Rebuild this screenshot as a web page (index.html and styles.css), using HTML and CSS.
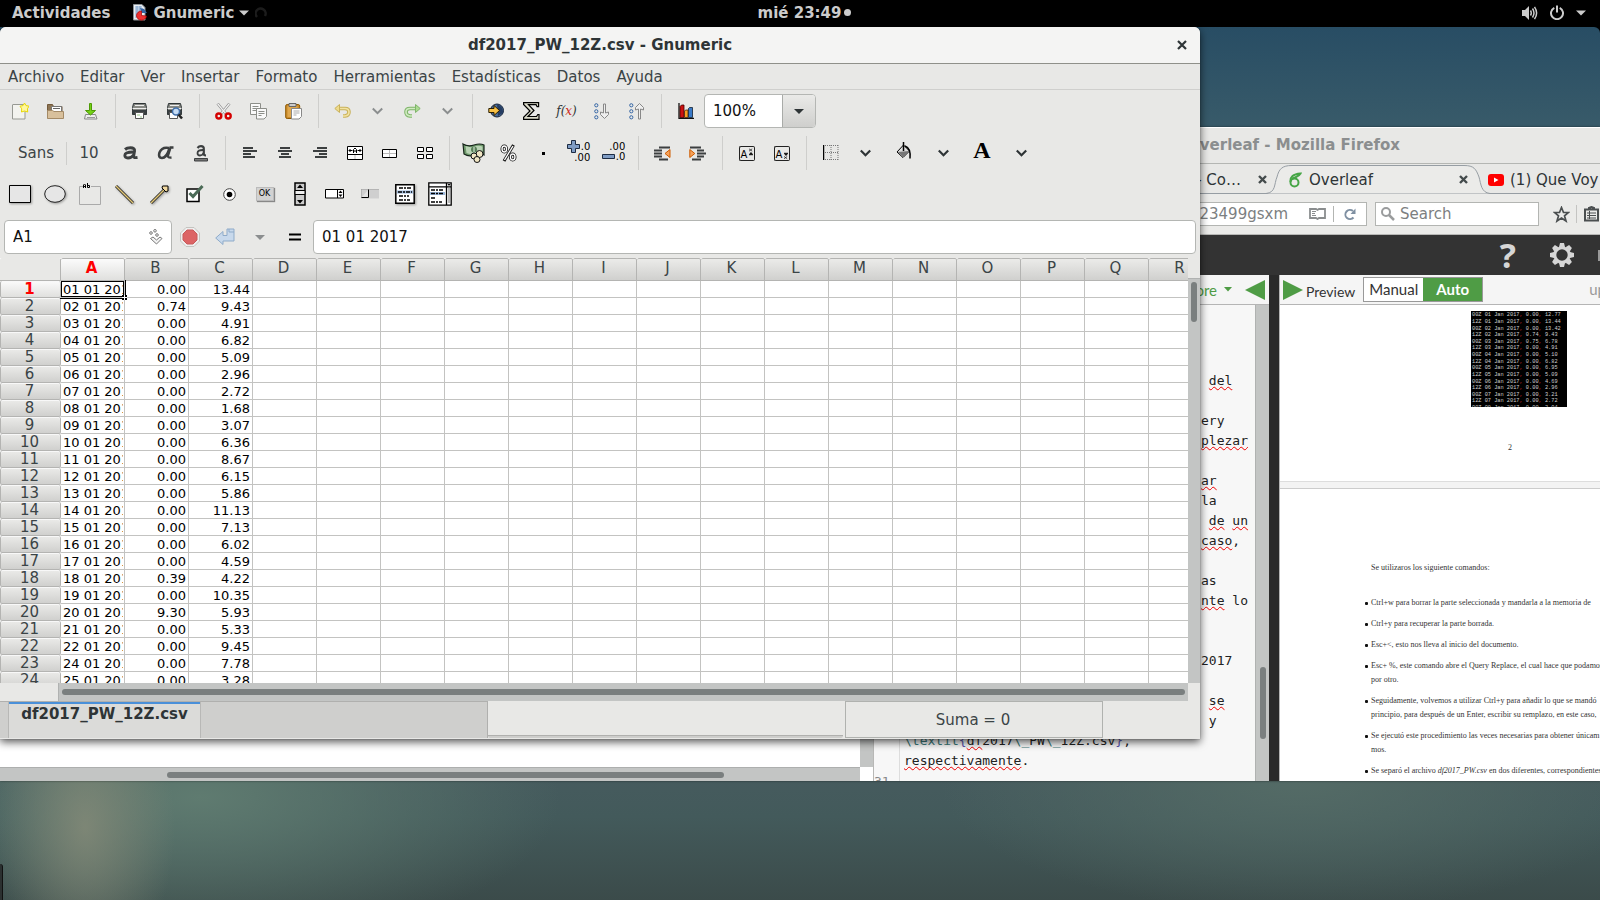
FILE: index.html
```html
<!DOCTYPE html>
<html lang="es">
<head>
<meta charset="utf-8">
<title>df2017_PW_12Z.csv - Gnumeric</title>
<link rel="stylesheet" href="styles.css">
</head>
<body>
<header class="topbar">
  <div class="topbar-left">
    <button class="top-item">Actividades</button>
    <button class="top-item app-item">
      <svg width="16" height="17" viewBox="0 0 16 17"><path d="M1.500 .5H10l3 3V16H1.500z" fill="#e9eef2" stroke="#8b9196"/><path d="M3 3h7M3 5h8M3 7h8M3 9h4M3 11h2M3 13h2M5 2v11M8 2v5" stroke="#6d94c4" stroke-width=".8"/><path d="M8 4l4 1 3 4h-5z" fill="#3465a4"/><path d="M9.500 7v4.500l5 .5a5 4.600 0 1 1-5-5z" fill="#ef3030" stroke="#a40000" stroke-width=".7"/></svg>
      Gnumeric
      <svg width="10" height="6" viewBox="0 0 10 6"><path d="M0 .5h10L5 5.500z" fill="#ccc"/></svg>
    </button>
    <svg class="spinner" width="12" height="12" viewBox="0 0 12 12"><path d="M2 10A5 5 0 1 1 10 9" fill="none" stroke="#1c1c1c" stroke-width="2.500"/></svg>
  </div>
  <button class="top-item clock">mié 23:49<span class="dot"></span></button>
  <button class="top-item status">
    <svg width="16" height="14" viewBox="0 0 16 14"><path d="M0 4h3l4-4v14L3 10H0z" fill="#ccc"/><path d="M8.500 4.500q1.500 2.500 0 5M10.500 2.500q3 4.500 0 9M12.500 .8q4.200 6.200 0 12.400" fill="none" stroke="#ccc" stroke-width="1.500"/></svg>
    <svg width="14" height="15" viewBox="0 0 14 15"><path d="M4.300 2.800A6 6 0 1 0 9.700 2.800M7 .5v7" fill="none" stroke="#ccc" stroke-width="2"/></svg>
    <svg width="10" height="6" viewBox="0 0 10 6"><path d="M0 .5h10L5 5.500z" fill="#ccc"/></svg>
  </button>
</header>

<main class="desktop">
  <section class="firefox">
    <div class="ff-title">Overleaf - Mozilla Firefox</div>
    <div class="ff-tabs">
      <div class="ff-tab tab-prev"><span>- Co…</span><button class="close" aria-label="Cerrar pestaña"><svg width="9" height="9" viewBox="0 0 9 9"><path d="M1 1l7 7M8 1L1 8" stroke="#444b4c" stroke-width="2.400"/></svg></button></div>
      <div class="ff-tab tab-active">
        <svg class="tab-shape" width="224" height="30" viewBox="0 0 224 30"><path d="M0 29.500C10 28.500 8 20 11 13C13 5 16 1.500 26 1.500H198C208 1.500 210 5 213 13C215 20 215 28.500 224 29.500" fill="#ebebe9" stroke="#969da3"/></svg>
        <svg class="fav" width="13" height="16" viewBox="0 0 13 16"><circle cx="5.500" cy="10.500" r="4" fill="none" stroke="#47a647" stroke-width="2"/><path d="M1.500 10C1 5 4 2 11.500 1.500C10 4.500 7 5 4 6.500" fill="none" stroke="#47a647" stroke-width="2"/></svg>
        <span>Overleaf</span>
        <button class="close" aria-label="Cerrar pestaña"><svg width="9" height="9" viewBox="0 0 9 9"><path d="M1 1l7 7M8 1L1 8" stroke="#444b4c" stroke-width="2.400"/></svg></button>
      </div>
      <div class="ff-tab tab-next"><svg width="16" height="12" viewBox="0 0 16 12"><rect width="16" height="12" rx="3" fill="#f00"/><path d="M6 3.500l4.500 2.500L6 8.500z" fill="#fff"/></svg><span>(1) Que Voy</span></div>
    </div>
    <div class="ff-nav">
      <div class="url-box">
        <input type="text" class="url" value="23499gsxm" aria-label="Dirección">
        <svg width="17" height="12" viewBox="0 0 17 12"><path d="M1 1h6l1.500 1L10 1h6v9h-6l-1.500 1L7 10H1z" fill="none" stroke="#8a8d8e" stroke-width="1.800"/><path d="M3 3.500h4M3 5.500h3M3 7.500h4" stroke="#8a8d8e"/></svg>
        <i class="url-sep"></i>
        <svg width="13" height="13" viewBox="0 0 13 13"><path d="M9.500 9.500A4.600 4.600 0 1 1 9 3" fill="none" stroke="#7f90a2" stroke-width="2"/><path d="M11.500 .5V6H6.500z" fill="#7f90a2"/></svg>
      </div>
      <label class="search-box"><svg width="14" height="14" viewBox="0 0 14 14"><circle cx="5" cy="5" r="4" fill="none" stroke="#9a9c9d" stroke-width="2"/><path d="M8 8l5 5" stroke="#9a9c9d" stroke-width="2.500"/></svg><input type="text" placeholder="Search" aria-label="Search"></label>
      <button class="nav-icon" aria-label="Marcador"><svg width="17" height="17" viewBox="0 0 17 17"><path d="M8.500 1.500l2 5h5l-4 3.300 1.500 5.200-4.500-3-4.500 3 1.500-5.200-4-3.300h5z" fill="none" stroke="#4b4f50" stroke-width="1.700"/></svg></button>
      <i class="nav-sep"></i>
      <button class="nav-icon" aria-label="Lista"><svg width="16" height="16" viewBox="0 0 16 16"><path d="M1 3.500h13v11H1zM5 3V2l2.500-1L10 2v1" fill="none" stroke="#4b4f50" stroke-width="2"/><path d="M3 7h9M3 9.500h9M3 12h9M5.500 5v8" stroke="#4b4f50"/></svg></button>
    </div>
    <div class="ol-head">
      <button class="ol-help" aria-label="Ayuda">?</button>
      <button class="ol-gear" aria-label="Ajustes"><svg width="24" height="24" viewBox="-12 -12 24 24"><g fill="#d6d6d6"><g id="tooth"><path d="M-2-12h4l1 4h-6zM-2 12h4l1-4h-6z"/></g><use href="#tooth" transform="rotate(45)"/><use href="#tooth" transform="rotate(90)"/><use href="#tooth" transform="rotate(135)"/></g><circle r="7.200" fill="none" stroke="#d6d6d6" stroke-width="3"/></svg></button>
      <i class="ol-edge"></i>
    </div>
    <div class="ol-body">
      <div class="files"><div class="files-strip"></div><div class="files-page"><i></i></div><div class="files-scroll"><i></i></div></div>
      <div class="editor">
        <div class="editor-bar"><a href="#">More <svg width="8" height="5" viewBox="0 0 8 5"><path d="M0 0h8L4 4.500z" fill="#4f9c45"/></svg></a><button aria-label="Ocultar editor"><svg width="20" height="20" viewBox="0 0 20 20"><path d="M20 0v20L0 10z" fill="#4f9c45"/></svg></button></div>
        <div class="editor-main">
          <div class="gutter">31</div>
          <div class="code">
            <p class="tail"> <u>del</u></p><p></p><p class="tail">ery</p><p class="tail"><u>plezar</u></p><p></p><p class="tail"><u>ar</u></p><p class="tail">la</p><p class="tail"> <u>de</u> <u>un</u></p><p class="tail"><u>caso</u>,</p><p></p><p class="tail">as</p><p class="tail"><u>nte</u> lo</p><p></p><p></p><p class="tail">2017</p><p></p><p class="tail"> <u>se</u></p><p class="tail"> y</p><p><b>\textit</b><em>{</em><u>df</u>2017<b>\_</b>PW<b>\_</b>12Z.csv<em>}</em>,</p><p><u>respectivamente</u>.</p>
          </div>
          <div class="editor-scroll"><i></i></div>
        </div>
      </div>
      <div class="splitter"></div>
      <div class="preview">
        <div class="preview-bar">
          <button aria-label="Ocultar vista"><svg width="20" height="20" viewBox="0 0 20 20"><path d="M0 0v20L20 10z" fill="#4f9c45"/></svg></button>
          <span class="preview-label">Preview</span>
          <div class="mode"><button>Manual</button><button class="on">Auto</button></div>
          <span class="upd">up</span>
        </div>
        <div class="page page-one">
          <svg class="shot" width="96" height="96" viewBox="0 0 290 290"><rect width="290" height="290"/><g id="shot-lines"></g></svg>
          <span class="page-no">2</span>
        </div>
        <div class="page page-two">
          <p>Se utilizaros los siguiente comandos:</p>
          <ul>
            <li>Ctrl+w para borrar la parte seleccionada y mandarla a la memoria de</li>
            <li>Ctrl+y para recuperar la parte borrada.</li>
            <li>Esc+&lt;, esto nos lleva al inicio del documento.</li>
            <li>Esc+ %, este comando abre el Query Replace, el cual hace que podamos<br>por otro.</li>
            <li>Seguidamente, volvemos a utilizar Ctrl+y para añadir lo que se mandó<br>principio, para después de un Enter, escribir su remplazo, en este caso,</li>
            <li>Se ejecutó este procedimiento las veces necesarias para obtener únicam<br>mos.</li>
            <li>Se separó el archivo <i>df2017_PW.csv</i> en dos diferentes, correspondientes</li>
          </ul>
        </div>
      </div>
    </div>
  </section>

  <i class="tray"></i>

  <section class="gnumeric">
    <div class="g-title"><h1>df2017_PW_12Z.csv - Gnumeric</h1><button class="g-close" aria-label="Cerrar"><svg width="10" height="10" viewBox="0 0 10 10"><path d="M1 1l8 8M9 1L1 9" stroke="#2e3436" stroke-width="2.200"/></svg></button></div>
    <nav class="menubar"><button>Archivo</button><button>Editar</button><button>Ver</button><button>Insertar</button><button>Formato</button><button>Herramientas</button><button>Estadísticas</button><button>Datos</button><button>Ayuda</button></nav>

    <div class="toolbar">
      <button aria-label="Nuevo"><svg width="17" height="17" viewBox="0 0 17 17"><path d="M.5 2Q.5 1.500 1 1.500H13V16H.5z" fill="#f3f3ef" stroke="#979993"/><path d="M12.500 0l1.500 2.600 3 .6-1.600 2.600.3 3.200-3.200-1-3 1 .2-3.200L8 3.200l3-.6z" fill="#fff7a0" stroke="#e8d800"/></svg></button>
      <button aria-label="Abrir"><svg width="17" height="17" viewBox="0 0 17 17"><path d="M.5 15V1.500h5l1 2H15V15z" fill="#8d7554" stroke="#72593a"/><path d="M4.500 3.500h10v6h-10z" fill="#fff" stroke="#777"/><path d="M6 5.500h7" stroke="#666"/><path d="M.5 7.500h5l1.500 1h9.500v7H.5z" fill="#d8c09c" stroke="#a48a66"/></svg></button>
      <button aria-label="Guardar"><svg width="14" height="17" viewBox="0 0 14 17"><path d="M1.500 11.500h10l1.500 4.500H.5z" fill="#eee" stroke="#888"/><path d="M3 14.500h8" stroke="#999"/><path d="M5.500.5h2v7h4L6.500 12 1.500 7.500h4z" fill="#73d216" stroke="#4e9a06"/></svg></button>
      <i class="sep"></i>
      <button aria-label="Imprimir"><svg width="17" height="17" viewBox="0 0 17 17"><path d="M2.500.5h12l1 4v7h-14v-7z" fill="#888a85" stroke="#2e3436"/><path d="M4 2.500h9M1.500 5.500h14" stroke="#eee"/><path d="M1.500 7h14v4.500h-14z" fill="#3a4042"/><path d="M4.500 9.500h8v6h-8z" fill="#fff" stroke="#555"/><path d="M6 12h3m0 2h2" stroke="#9ac98a"/></svg></button>
      <button aria-label="Vista previa"><svg width="17" height="17" viewBox="0 0 17 17"><path d="M2.500.5h12l1 4v7h-14v-7z" fill="#888a85" stroke="#2e3436"/><path d="M4 2.500h9M1.500 5.500h14" stroke="#eee"/><path d="M1.500 7h14v4.500h-14z" fill="#3a4042"/><path d="M3.500 9.500h8v6h-8z" fill="#fff" stroke="#555"/><circle cx="10" cy="8.500" r="3.500" fill="#c6dcf4" stroke="#3f6eaa" stroke-width="1.500"/><path d="M12.500 11.500l3.500 4" stroke="#222" stroke-width="2.500"/></svg></button>
      <i class="sep"></i>
      <button aria-label="Cortar"><svg width="17" height="17" viewBox="0 0 17 17"><path d="M2.500.5L11 11M14.500.5L6 11" stroke="#888" stroke-width="2.600"/><path d="M2.500.5L11 11M14.500.5L6 11" stroke="#f2f2f2" stroke-width="1.200"/><circle cx="3.800" cy="13" r="2.500" fill="#eee" stroke="#d40000" stroke-width="2.400"/><circle cx="13.200" cy="13" r="2.500" fill="#eee" stroke="#d40000" stroke-width="2.400"/></svg></button>
      <button aria-label="Copiar"><svg width="17" height="17" viewBox="0 0 17 17"><g fill="#fafafa" stroke="#8c8e89"><path d="M.5.5h10v11H.5z"/><path d="M2.500 3.500h6M2.500 5.500h6M2.500 7.500h4"/><path d="M6.500 5.500h10v8l-2.500 2.500H6.500z"/><path d="M8.500 8.500h6M8.500 10.500h6M8.500 12.500h3"/></g></svg></button>
      <button aria-label="Pegar"><svg width="17" height="17" viewBox="0 0 17 17"><rect x=".7" y="1.500" width="14" height="14" rx="1.500" fill="#c98a2b" stroke="#8f5902"/><path d="M2.500 3h10v11h-10z" fill="#e0a84e"/><path d="M4 .5h7v3H4z" fill="#ccc" stroke="#666"/><path d="M6.500 5.500h10v8L14 16H6.500z" fill="#fff" stroke="#888"/><path d="M8.500 8h6M8.500 10h6M8.500 12h3" stroke="#aaa"/></svg></button>
      <i class="sep"></i>
      <button aria-label="Deshacer"><svg width="17" height="14" viewBox="0 0 17 14"><path d="M6 4.500h5q4 0 4 3.500t-4 4H9" fill="none" stroke="#c9b25c" stroke-width="3.600"/><path d="M6 4.500h5q4 0 4 3.500t-4 4H9" fill="none" stroke="#f2e3a2" stroke-width="1.600"/><path d="M5.500.5v8L.8 4.500z" fill="#efdb8a" stroke="#c9b25c"/></svg></button>
      <button class="chev dim" aria-label="Lista de deshacer"><svg width="11" height="8" viewBox="0 0 11 8"><path d="M.8 1.500l4.700 4.700 4.700-4.700" fill="none" stroke="currentColor" stroke-width="2"/></svg></button>
      <button aria-label="Rehacer"><svg width="17" height="14" viewBox="0 0 17 14"><g transform="matrix(-1 0 0 1 17 0)"><path d="M6 4.500h5q4 0 4 3.500t-4 4H9" fill="none" stroke="#7fb56a" stroke-width="3.600"/><path d="M6 4.500h5q4 0 4 3.500t-4 4H9" fill="none" stroke="#cfeac0" stroke-width="1.600"/><path d="M5.500.5v8L.8 4.500z" fill="#aadb90" stroke="#7fb56a"/></g></svg></button>
      <button class="chev dim" aria-label="Lista de rehacer"><svg width="11" height="8" viewBox="0 0 11 8"><path d="M.8 1.500l4.700 4.700 4.700-4.700" fill="none" stroke="currentColor" stroke-width="2"/></svg></button>
      <i class="sep"></i>
      <button aria-label="Hiperenlace"><svg width="17" height="16" viewBox="0 0 17 16"><circle cx="9" cy="7.500" r="6.500" fill="#4a6c9b" stroke="#16243a"/><path d="M9 1a9 9 0 0 1 6 9l-5 3z" fill="#253d62"/><path d="M.8 5.500H6V2.500l5.500 5-5.500 5V9.500H.8z" fill="#f8c146" stroke="#2b1f00"/></svg></button>
      <button aria-label="Suma"><svg width="17" height="18" viewBox="0 0 17 18"><path d="M.6.7h15v4h-1.500l-1-2H5.500L11 8.500 5 14.500h8.500l1.300-2H16v4.800H.6v-2L7 9 .6 2.500z" fill="#dcdccb" stroke="#000" stroke-width="1.200"/></svg></button>
      <button class="fx" aria-label="Función">f(<span>x</span>)</button>
      <button aria-label="Ordenar ascendente"><svg width="16" height="17" viewBox="0 0 16 17"><g fill="none" stroke="#3465a4"><circle cx="2.300" cy="2.300" r="1.600"/><circle cx="2.300" cy="8.300" r="1.600"/><circle cx="2.300" cy="14.300" r="1.600"/></g><path d="M9.500 1h2v9l3-1v2.500l-4 4-4-4V9l3 1z" fill="#eee" stroke="#888"/></svg></button>
      <button aria-label="Ordenar descendente"><svg width="16" height="17" viewBox="0 0 16 17"><g fill="none" stroke="#3465a4"><circle cx="2.300" cy="2.300" r="1.600"/><circle cx="2.300" cy="8.300" r="1.600"/><circle cx="2.300" cy="14.300" r="1.600"/></g><path d="M9.500 16h2V6l3 1V4.500l-4-4-4 4V7l3-1z" fill="#eee" stroke="#888"/></svg></button>
      <i class="sep"></i>
      <button aria-label="Gráfico"><svg width="16" height="16" viewBox="0 0 16 16"><path d="M1 0v15.300h15" fill="none" stroke="#111" stroke-width="1.300"/><path d="M2 3.500l1.500-1.500h2.500v12.500H2z" fill="#cc1010" stroke="#400" stroke-width=".8"/><path d="M6.500 8l1-1h2.500v7.500H6.500z" fill="#f8a020" stroke="#421" stroke-width=".8"/><path d="M10.500 5.500l1-1h3v10h-4z" fill="#3a7ac8" stroke="#123" stroke-width=".8"/></svg></button>
      <div class="combo"><input type="text" value="100%" aria-label="Ampliación"><button aria-label="Elegir ampliación"><svg width="10" height="5" viewBox="0 0 10 5"><path d="M0 0h10L5 5z" fill="#2e3436"/></svg></button></div>
    </div>

    <div class="toolbar">
      <button class="font-name">Sans</button><i class="short-sep"></i><button class="font-size">10</button>
      <button aria-label="Negrita"><svg width="17" height="14" viewBox="0 0 17 14"><g fill="none" stroke="#3c3f40"><path d="M3 3.500Q5 1.800 8.500 1.800Q13 1.800 12.500 5L11.500 10.500Q11.500 12 15.500 11.500" stroke-width="3"/><path d="M12 6Q3 5.800 2.800 9.300Q2.800 12 6 12Q9.500 12 11.500 9" stroke-width="2.800"/></g></svg></button>
      <button aria-label="Cursiva"><svg width="17" height="14" viewBox="0 0 17 14"><g fill="none" stroke="#3c3f40"><path d="M12 2Q5 .5 2.500 6.500Q1 12 5 12Q9.500 12 12.500 2.500" stroke-width="2.600"/><path d="M16.500 1.500H13.500L11 9.500Q10.500 12 14.500 11.500" stroke-width="2.400"/></g></svg></button>
      <button aria-label="Subrayado"><svg width="14" height="17" viewBox="0 0 14 17"><g fill="none" stroke="#3c3f40"><path d="M3.500 3Q5 1.200 7 1.200Q10 1.200 9.800 4V9Q9.800 10.500 12 10.300" stroke-width="2.200"/><path d="M9.500 5Q3.500 4.800 3.500 8Q3.500 10.500 6 10.500Q8.500 10.500 9.500 8" stroke-width="1.800"/></g><path d="M.5 13.500h13v2.500H.5z" fill="#777" stroke="#3c3f40"/></svg></button>
      <i class="sep"></i>
      <button aria-label="Izquierda"><svg width="14" height="12" viewBox="0 0 14 12"><path d="M0 1h10M0 4h14M0 7h8M0 10h12" stroke="#3c3f40" stroke-width="2"/></svg></button>
      <button aria-label="Centro"><svg width="14" height="12" viewBox="0 0 14 12"><path d="M2 1h10M0 4h14M3 7h8M1 10h12" stroke="#3c3f40" stroke-width="2"/></svg></button>
      <button aria-label="Derecha"><svg width="14" height="12" viewBox="0 0 14 12"><path d="M4 1h10M0 4h14M6 7h8M2 10h12" stroke="#3c3f40" stroke-width="2"/></svg></button>
      <button aria-label="Centrar en selección"><svg width="16" height="14" viewBox="0 0 16 14"><path d="M.5.500h15v13h-15zM.5 8.500h15" fill="#fff" stroke="#000"/><path d="M8 9v4" stroke="#bbb"/><path d="M1.500 4.500h4M10.500 4.500h4M3 3v3M13 3v3" stroke="#000"/><path d="M6.500 7V3.500L8 2l1.500 1.500V7M6.500 5h3" fill="none" stroke="#000"/></svg></button>
      <button aria-label="Combinar"><svg width="15" height="9" viewBox="0 0 15 9"><path d="M.5.500h14v8H.5z" fill="#fff" stroke="#000"/><path d="M1 4.500h13M7.500 1v7" stroke="#bbb"/></svg></button>
      <button aria-label="Dividir"><svg width="16" height="12" viewBox="0 0 16 12"><path d="M.5.500h6v4h-6zM9.500.500h6v4h-6zM.5 7.500h6v4h-6zM9.500 7.500h6v4h-6z" fill="#fff" stroke="#000"/></svg></button>
      <i class="sep"></i>
      <button aria-label="Moneda"><svg width="24" height="22" viewBox="0 0 24 22"><path d="M1 2q5 3 11 1t10 0v10q-5-2-10 0T2 12z" fill="#6f9a6c" stroke="#16241a" stroke-width="1.200"/><path d="M3.500 4q5 2 9 .5t8 0v6.500q-4-1-8 .5t-8-.5z" fill="#b9d3b4"/><circle cx="12" cy="7.500" r="3" fill="#587f58"/><path d="M12 5v5" stroke="#dfeedd"/><g fill="#f1e6c4" stroke="#111"><circle cx="17.500" cy="12" r="3.500"/><circle cx="12" cy="14" r="3"/><circle cx="15" cy="17.500" r="3"/></g></svg></button>
      <button aria-label="Porcentaje"><svg width="17" height="18" viewBox="0 0 17 18"><g fill="none" stroke="#111" stroke-width="3"><ellipse cx="4.300" cy="5" rx="2.300" ry="3"/><ellipse cx="12.700" cy="13" rx="2.300" ry="3"/><path d="M13.500 1L4 17"/></g><g fill="none" stroke="#fff" stroke-width="1.400"><ellipse cx="4.300" cy="5" rx="2.300" ry="3"/><ellipse cx="12.700" cy="13" rx="2.300" ry="3"/><path d="M13 2L4.500 16"/></g></svg></button>
      <button aria-label="Miles"><svg width="3" height="3" viewBox="0 0 3 3"><path d="M0 0h3v3H0z"/></svg></button>
      <button class="decimals" aria-label="Más decimales"><svg width="13" height="13" viewBox="0 0 13 13"><path d="M4.500.5h4v4h4v4h-4v4h-4v-4h-4v-4h4z" fill="#7f9cc4" stroke="#1d2c44"/></svg><span>.0</span><span>.00</span></button>
      <button class="decimals fewer" aria-label="Menos decimales"><span>.00</span><svg width="13" height="5" viewBox="0 0 13 5"><path d="M.5.5h12v4H.5z" fill="#7f9cc4" stroke="#1d2c44"/></svg><span>.0</span></button>
      <i class="sep"></i>
      <button aria-label="Reducir sangría"><svg width="17" height="15" viewBox="0 0 17 15"><path d="M5 1.500h11M0 4.500h8M0 7.500h8M0 10.500h8M5 13.500h9" stroke="#3c3f40" stroke-width="2"/><path d="M16 3.500v8l-5-4z" fill="#f7a35c" stroke="#ce5c00"/></svg></button>
      <button aria-label="Aumentar sangría"><svg width="17" height="15" viewBox="0 0 17 15"><path d="M1 1.500h11M8 4.500h7M8 7.500h9M8 10.500h7M3 13.500h9" stroke="#3c3f40" stroke-width="2"/><path d="M.8 3.500v8l5-4z" fill="#f7a35c" stroke="#ce5c00"/></svg></button>
      <i class="sep"></i>
      <button class="script-btn" aria-label="Superíndice"><span>A</span><svg width="5" height="8" viewBox="0 0 5 8"><path d="M0 0l4 3M4 0L0 3M0 7.500h5L2.500 4.500z" stroke="#000" stroke-width=".8"/></svg></button>
      <button class="script-btn low" aria-label="Subíndice"><span>A</span><svg width="5" height="8" viewBox="0 0 5 8"><path d="M0 4.500l4 3M4 4.500l-4 3M0 .5h5L2.500 3.500z" stroke="#000" stroke-width=".8"/></svg></button>
      <i class="sep"></i>
      <button aria-label="Bordes"><svg width="16" height="16" viewBox="0 0 16 16"><path d="M.5 0v15" stroke="#000" stroke-width="1.500"/><path d="M2 .5h13.500M2 7.500h13.500M2 14.500h13.500M8 0v15M15 0v15" stroke="#777" stroke-dasharray="1 1"/></svg></button>
      <button class="chev" aria-label="Tipos de borde"><svg width="11" height="8" viewBox="0 0 11 8"><path d="M.8 1.500l4.700 4.700 4.700-4.700" fill="none" stroke="currentColor" stroke-width="2.200"/></svg></button>
      <button class="wide up" aria-label="Fondo"><svg width="16" height="17" viewBox="0 0 16 17"><path d="M7.500 3l6 6-6.500 6.500L1 10z" fill="#ddd" stroke="#000"/><path d="M1.500 10l6 5 5.500-6z" fill="#777"/><path d="M7.500 0v9M9 4q6 2 5 12.500" fill="none" stroke="#000" stroke-width="1.500"/></svg></button>
      <button class="chev" aria-label="Colores de fondo"><svg width="11" height="8" viewBox="0 0 11 8"><path d="M.8 1.500l4.700 4.700 4.700-4.700" fill="none" stroke="currentColor" stroke-width="2.200"/></svg></button>
      <button class="wide fore" aria-label="Primer plano">A</button>
      <button class="chev" aria-label="Colores de texto"><svg width="11" height="8" viewBox="0 0 11 8"><path d="M.8 1.500l4.700 4.700 4.700-4.700" fill="none" stroke="currentColor" stroke-width="2.200"/></svg></button>
    </div>

    <div class="toolbar shapes">
      <button aria-label="Rectángulo"><svg class="drop" width="22" height="18" viewBox="0 0 22 18"><path d="M.5.500h21v17H.5z" fill="#e6e6e6" stroke="#000"/></svg></button>
      <button aria-label="Elipse"><svg class="drop" width="22" height="18" viewBox="0 0 22 18"><ellipse cx="11" cy="9" rx="10.300" ry="8.300" fill="#e6e6e6" stroke="#222"/></svg></button>
      <button aria-label="Marco"><svg width="22" height="22" viewBox="0 0 22 22"><path d="M4 3.500H.5v18h21v-18H12" fill="none" stroke="#aaa"/><path d="M4.500 5V2l1-1 1 1v3M4.500 3.500h2M8.500 0v4.500h2v-2h-2" fill="none" stroke="#000"/></svg></button>
      <button aria-label="Línea"><svg class="drop" width="19" height="19" viewBox="0 0 19 19"><path d="M1 1l17 17" stroke="#222" stroke-width="3"/><path d="M1 1l17 17" stroke="#e3c877" stroke-width="1.500"/></svg></button>
      <button aria-label="Flecha"><svg class="drop" width="19" height="19" viewBox="0 0 19 19"><path d="M1 18L14 5" stroke="#222" stroke-width="3"/><path d="M1 18L14 5" stroke="#e3c877" stroke-width="1.500"/><path d="M12.500 1h5.500v5l-2 1-4-4z" fill="#f0d8a0" stroke="#000"/></svg></button>
      <button aria-label="Casilla"><svg width="18" height="18" viewBox="0 0 18 18"><path d="M1 4h12v12.500H1z" fill="#fff" stroke="#000" stroke-width="1.500"/><path d="M3.500 8l3.500 3.500L16.500 1" fill="none" stroke="#4b6b57" stroke-width="3"/></svg></button>
      <button aria-label="Botón de opción"><svg width="13" height="13" viewBox="0 0 13 13"><circle cx="6.500" cy="6.500" r="5.800" fill="#fff" stroke="#444"/><circle cx="6.500" cy="6.500" r="2.800"/></svg></button>
      <button class="ok-icon" aria-label="Botón"><span>OK</span></button>
      <button aria-label="Barra de desplazamiento"><svg width="12" height="24" viewBox="0 0 12 24"><path d="M1 1h10v22H1z" fill="#ccc" stroke="#000" stroke-width="1.500"/><path d="M1 8.500h10v4H1z" fill="#eee" stroke="#000"/><path d="M3 6l3-3.500L9 6zM3 18l3 3.500L9 18z"/></svg></button>
      <button aria-label="Botón giratorio"><svg width="19" height="10" viewBox="0 0 19 10"><path d="M.5.500h18v8.500H.5z" fill="#fff" stroke="#000"/><path d="M12.500 1v8" stroke="#000"/><path d="M13.500 4l2-2.500 2 2.500zM13.500 5.500l2 2.500 2-2.500z"/></svg></button>
      <button aria-label="Deslizador"><svg width="18" height="10" viewBox="0 0 18 10"><path d="M0 0h18v9.500H0z" fill="#cfcfcf"/><path d="M0 9V0h18" fill="none" stroke="#999"/><path d="M.5 8.500h7V.5" fill="#e4e4e4" stroke="#000"/></svg></button>
      <button aria-label="Lista"><svg class="drop" width="20" height="20" viewBox="0 0 20 20"><path d="M.8.800h18.400v18.400H.8z" fill="#fff" stroke="#000" stroke-width="1.500"/><path d="M2 6.500h16v3H2z" fill="#9db9dc"/><path d="M4 4h12M3 8h14M4 12h10M4 16h11" stroke="#000" stroke-width="1.300" stroke-dasharray="4 1 2 1"/></svg></button>
      <button aria-label="Cuadro combinado"><svg width="24" height="24" viewBox="0 0 24 24"><path d="M.8.800h22.400v4H.8zM.8 4.800h22.400v18.400H.8zM18.500.8v22.400" fill="#fff" stroke="#000" stroke-width="1.300"/><path d="M2 10h15v3H2z" fill="#9db9dc"/><path d="M3 8h12M3 11.500h13M3 16h4M3 20h11" stroke="#000" stroke-width="1.300" stroke-dasharray="4 1 2 1"/><path d="M19.500 2h3L21 4z"/><path d="M20 6h2v15h-2z" fill="#bbb"/></svg></button>
    </div>

    <div class="formula-bar">
      <div class="name-box"><input type="text" value="A1" aria-label="Celda"><svg width="14" height="16" viewBox="0 0 14 16"><g fill="#fff" stroke="#777"><circle cx="2" cy="4" r="1.300"/><circle cx="6" cy="1.800" r="1.300"/><circle cx="8" cy="6" r="1.300"/></g><path d="M1.500 9.500L4 8l3.500 3L11 8l2 1.500-5.500 5.500z" fill="#f3f3f3" stroke="#777"/></svg></div>
      <button aria-label="Cancelar"><svg width="20" height="20" viewBox="0 0 20 20"><path d="M6 .5h8L19.500 6v8L14 19.500H6L.5 14V6z" fill="#eee" stroke="#c4c4c0"/><path d="M7 3h6l4 4v6l-4 4H7l-4-4V7z" fill="#dc6465" stroke="#c85a5a"/></svg></button>
      <button aria-label="Aceptar"><svg width="20" height="18" viewBox="0 0 20 18"><path d="M.7 10L8 3.500v4h4V1h7v12H8v3.500z" fill="#c8d9ec" stroke="#8fabc9"/><path d="M14 1v3h5" fill="none" stroke="#8fabc9"/></svg></button>
      <button aria-label="Más opciones"><svg width="10" height="5" viewBox="0 0 10 5"><path d="M0 0h10L5 5z" fill="#8b8e8f"/></svg></button>
      <button class="equals" aria-label="Fórmula"><svg width="12" height="8" viewBox="0 0 12 8"><path d="M0 1.500h12M0 6.500h12" stroke="#000" stroke-width="2"/></svg></button>
      <input type="text" class="formula" value="01 01 2017" aria-label="Contenido">
    </div>

    <div class="sheet-area">
      <div class="sheet"><table><thead><tr id="cols"></tr></thead><tbody id="rows"></tbody></table></div>
      <div class="v-side"><div class="v-scroll"><i></i></div></div>
    </div>
    <div class="h-side"><div class="h-scroll"><i></i></div></div>
    <footer class="g-foot">
      <div class="sheet-tabs"><button>df2017_PW_12Z.csv</button></div>
      <div class="progress"></div>
      <div class="suma">Suma = 0</div>
      <div class="foot-end"></div>
    </footer>
  </section>
</main>
<script src="sheet.js"></script>
</body>
</html>
```
FILE: styles.css
```css
* { box-sizing: border-box; }
body { margin: 0; height: 100vh; display: flex; flex-direction: column; overflow: hidden; background: #000; font: 15px/20px "DejaVu Sans", sans-serif; color: #2e3436; }
button { font: inherit; color: inherit; background: none; border: 0; padding: 0; margin: 0; white-space: nowrap; }
input { font: inherit; color: inherit; border: 0; background: none; padding: 0; min-width: 0; outline: 0; }
svg { display: block; flex: none; }
p, h1, ul { margin: 0; padding: 0; }

/* top panel */
.topbar { flex: none; height: 27px; display: grid; grid-template-columns: 1fr auto 1fr; align-items: center; padding: 0 14px 2px 12px; color: #ccc; font-weight: bold; }
.topbar-left, .top-item { display: flex; align-items: center; }
.app-item { gap: 5px; margin-left: 22px; }
.spinner { margin-left: 6px; }
.clock { padding-left: 11px; }
.dot { width: 7px; height: 7px; border-radius: 50%; background: #ccc; margin-left: 3px; }
.status { justify-self: end; gap: 12px; }

.desktop { flex: 1; position: relative; overflow: hidden; border-top-right-radius: 6px; background: radial-gradient(ellipse 90px 150px at 85px 800px, #878c79cc, #878c7900), radial-gradient(ellipse 360px 150px at 200px 770px, #5f7b70, #5f7b7000), radial-gradient(ellipse 360px 130px at 1300px 755px, #546b66, #546b6600), linear-gradient(#284d64 0, #3a5c6a 110px, #465b5e 750px, #435a5b 790px, #3b4b4a 100%); }
.tray { position: absolute; left: 0; bottom: 0; width: 3px; height: 36px; background: #2b3030; border-right: 1px solid #111; border-top-right-radius: 3px; }

/* browser window */
.firefox { position: absolute; left: 0; right: 0; top: 100px; bottom: 119px; display: flex; flex-direction: column; background: #ebebe9; border-top: 1px solid #fff; box-shadow: 0 0 2px #0008; overflow: hidden; }
.ff-title { flex: none; height: 36px; padding: 0 200px 0 0; text-align: right; font-weight: bold; line-height: 35px; color: #8b8e8f; background: #e8e8e6; border-bottom: 1px solid #b4b6b3; }
.ff-tabs { flex: none; height: 30px; display: flex; background: #e8e8e6; border-bottom: 1px solid #969da3; }
.ff-tab { display: flex; align-items: center; position: relative; padding-top: 2px; }
.tab-prev { flex: 1; justify-content: flex-end; gap: 17px; padding-right: 9px; }
.tab-active { width: 204px; padding-left: 13px; padding-right: 12px; gap: 7px; }
.tab-active > * { position: relative; }
.tab-active .tab-shape { position: absolute; left: -10px; top: 0; }
.tab-active .close { margin-left: auto; }
.tab-next { width: 120px; padding-left: 8px; gap: 6px; white-space: nowrap; }
.ff-nav { flex: none; height: 41px; display: flex; align-items: center; border-bottom: 1px solid #b8b8b6; }
.url-box, .search-box { height: 24px; display: flex; align-items: center; background: #fff; border: 1px solid #b3b5b2; }
.url-box { flex: 1; margin-right: 8px; padding-right: 9px; color: #7c8081; }
.url { flex: 1; text-align: right; margin-right: 21px; }
.url-sep { width: 1px; height: 16px; background: #b3b5b2; margin: 0 10px 0 7px; }
.search-box { width: 164px; padding-left: 5px; gap: 5px; }
.search-box input { width: 120px; }
.search-box input::placeholder { color: #7c8081; opacity: 1; }
.nav-icon { margin-left: 14px; }
.nav-sep { width: 1px; height: 18px; background: #c4c4c2; margin-left: 6px; }
.nav-sep + .nav-icon { margin-left: 7px; }
.ol-head { flex: none; height: 40px; display: flex; justify-content: flex-end; align-items: center; background: #333; color: #d6d6d6; }
.ol-help { font: bold 34px/40px "Open Sans", sans-serif; margin-right: 34px; }
.ol-gear { margin-right: 24px; }
.ol-edge { width: 2px; height: 11px; background: #999; }
.ol-body { flex: 1; min-height: 0; display: flex; }
.files { flex: none; width: 874px; display: flex; flex-direction: column; background: #fff; border-right: 1px solid #b8b8b6; }
.files-strip { flex: 1; margin-right: 41px; border-bottom: 1px solid #777; border-right: 1px solid #777; }
.files-page { height: 39px; display: flex; justify-content: flex-end; }
.files-page i { width: 13px; background: #c3c5c4; }
.files-scroll { height: 14px; margin-right: 13px; padding: 4px 136px 4px 167px; background: #c3c5c4; border-top: 1px solid #adafae; }
.files-scroll i, .h-scroll i { display: block; height: 6px; border-radius: 3px; background: #7a7f7f; }
.editor { flex: none; width: 395px; display: flex; flex-direction: column; background: #f7f7f7; }
.editor-bar, .preview-bar { flex: none; height: 30px; display: flex; align-items: center; background: #f5f5f5; border-bottom: 1px solid #b5b5b5; font: 15px/20px Lato, sans-serif; }
.editor-bar { justify-content: flex-end; gap: 13px; padding: 0 4px 0 0; }
.editor-bar a { color: #4f9c45; text-decoration: none; display: flex; align-items: center; gap: 7px; }
.editor-main { flex: 1; min-height: 0; display: flex; font: 13px/20px "DejaVu Sans Mono", monospace; color: #222; overflow: hidden; }
.gutter { flex: none; width: 26px; border-right: 1px solid #ddd; padding-top: 467px; color: #888; }
.code { flex: 1; display: flex; flex-direction: column; padding: 66px 0 0 4px; white-space: pre; }
.code p { flex: none; height: 20px; }
.code .tail { padding-left: 297px; }
.code u { text-decoration: underline wavy #e00 1px; text-decoration-skip-ink: none; text-underline-offset: 1px; }
.code b { font-weight: normal; color: #3c7a7a; }
.code em { font-style: normal; color: #5b55b0; }
.editor-scroll { flex: none; width: 14px; background: #c3c5c4; border-left: 1px solid #b0b2b1; display: flex; flex-direction: column; justify-content: flex-end; align-items: center; padding-bottom: 42px; }
.editor-scroll i { width: 6px; height: 72px; border-radius: 3px; background: #7a7f7f; }
.splitter { flex: none; width: 11px; background: #2a2a2a; border-right: 1px solid #b5b5b5; }
.preview { flex: 1; min-width: 0; display: flex; flex-direction: column; background: #f3f3f3; overflow: hidden; }
.preview-bar { padding-left: 3px; color: #333; }
.preview-label { margin-left: 3px; padding-top: 4px; font-size: 14px; }
.mode { display: flex; width: 120px; height: 25px; margin-left: 8px; border: 1px solid #999; background: #fff; }
.mode button { flex: 1; padding: 0 0 2px; }
.mode .on { background: #4f9c45; color: #fff; font-weight: bold; }
.upd { margin-left: auto; margin-right: -6px; padding-bottom: 2px; color: #999; }
.page { flex: none; background: #fff; color: #333; font: 8px/14px "Liberation Serif", serif; white-space: nowrap; }
.page-one { height: 177px; padding: 6px 0 0 191px; border-bottom: 1px solid #ddd; }
.shot text { font: 16px "Liberation Mono", monospace; fill: #d0d0d0; white-space: pre; }
.page-no { display: block; padding: 34px 0 0 37px; }
.page-two { flex: 1; margin-top: 6px; padding: 72px 0 0 91px; border-top: 1px solid #ccc; }
.page-two ul { margin-top: 21px; list-style: none; display: flex; flex-direction: column; gap: 7px; }
.page-two li { position: relative; }
.page-two li::before { content: ""; position: absolute; left: -6px; top: 6px; width: 3px; height: 3px; border-radius: 1px; background: #111; }

/* spreadsheet window */
.gnumeric { position: absolute; left: 0; top: 0; width: 75%; bottom: 161px; display: flex; flex-direction: column; background: #e8e8e6; border-radius: 6px 6px 0 0; overflow: hidden; box-shadow: 0 0 1px #0009, 0 3px 9px #000a; }
.g-title { flex: none; height: 37px; display: flex; align-items: center; background: #f4f4f3; border-bottom: 1px solid #8f908a; }
.g-title h1 { flex: 1; padding-left: 36px; text-align: center; font: bold 15px/20px "DejaVu Sans", sans-serif; }
.g-close { width: 36px; display: flex; justify-content: center; }
.menubar { flex: none; height: 26px; display: flex; gap: 16px; padding: 0 8px; border-bottom: 1px solid #cfcfcd; color: #3b4446; }
.toolbar, .formula-bar { flex: none; height: 42px; display: flex; align-items: center; padding-left: 3px; }
.toolbar > button, .formula-bar > button { flex: none; width: 35px; height: 34px; display: flex; align-items: center; justify-content: center; }
.shapes { padding: 0 0 2px 2px; }
.sep { flex: none; width: 1px; height: 34px; margin: 0 6px 0 7px; background: #cececc; }
.toolbar > .chev { color: #2e3436; }
.toolbar > .dim { color: #8b8e8f; }
.toolbar > .fx { font: italic 12px/16px "DejaVu Serif", "Liberation Serif", serif; }
.fx span { color: #cc2a1a; }
.combo { display: flex; width: 112px; height: 34px; margin-left: 1px; background: #fff; border: 1px solid #b4b6b3; border-radius: 4px; overflow: hidden; color: #111; }
.combo input { flex: 1; padding-left: 8px; }
.combo button { width: 33px; border-left: 1px solid #a9aba8; background: linear-gradient(#eaeae8, #cfcfcd); display: flex; align-items: center; justify-content: center; }
.toolbar > .font-name { width: 63px; padding: 0 0 0 3px; color: #3b4446; }
.short-sep { width: 1px; height: 23px; background: #cececc; }
.toolbar > .font-size { width: 46px; padding-right: 2px; color: #3b4446; }
.toolbar > .decimals { display: grid; grid-template-columns: auto auto; justify-content: center; align-content: center; align-items: center; justify-items: end; column-gap: 1px; font: 10px/10px "DejaVu Sans", sans-serif; color: #000; padding-bottom: 3px; }
.decimals:not(.fewer) span:last-child, .fewer span:first-child { grid-column: 1 / 3; }
.script-btn span { border: 1px solid #222; border-right: 0; border-radius: 2px 0 0 2px; height: 15px; width: 10px; font: 10px/15px "DejaVu Sans", sans-serif; color: #000; }
.script-btn svg { width: 6px; height: 15px; padding: 1px 1px 4px 0; border: 1px solid #222; border-left: 0; border-radius: 0 2px 2px 0; }
.low svg { padding: 5px 1px 0 0; }
.toolbar > .wide { width: 42px; }
.toolbar > .up { padding-bottom: 6px; }
.toolbar > .fore { font: bold 24px/24px "Liberation Serif", serif; color: #000; padding-bottom: 6px; }
.drop { filter: drop-shadow(1px 1px 1px #0005); overflow: visible; }
.ok-icon span { width: 18px; height: 14px; background: #d2d2d2; border: 1px solid #bbb; box-shadow: 1px 1px 1px #888; font: 8px/12px "DejaVu Sans", sans-serif; color: #000; }
.toolbar > .wide + .chev { width: 36px; }
.formula-bar { padding: 0 4px; }
.name-box { flex: none; width: 168px; height: 34px; display: flex; align-items: center; padding: 0 8px; background: #fff; border: 1px solid #b4b6b3; border-radius: 4px; color: #111; }
.name-box input { flex: 1; }
.formula { flex: 1; height: 34px; margin-left: 1px; padding: 0 8px; background: #fff; border: 1px solid #b4b6b3; border-radius: 4px; color: #111; }

.sheet-area { flex: 1; min-height: 0; display: flex; }
.sheet { flex: 1; min-width: 0; overflow: hidden; background: #fff; }
.sheet table { table-layout: fixed; width: 1213px; border-collapse: separate; border-spacing: 0; }
.sheet th, .sheet td { padding: 0; font-weight: normal; }
.sheet th { background: linear-gradient(#ebebe9, #d0d0ce); color: #3b4446; text-align: center; }
.sheet thead th { width: 64px; height: 23px; padding: 0 2px 2px 0; border: solid #b4b4b2; border-width: 1px 1px 1px 0; line-height: 19px; border-radius: 2px 2px 0 0; }
.sheet thead th:first-child { width: 61px; background: #e8e8e6; border-top-color: #e8e8e6; }
.sheet tbody th { height: 17px; padding-right: 2px; border: solid #b4b4b2; border-width: 0 1px 1px 1px; border-radius: 2px; box-shadow: inset 0 1px #f8f8f8; }
.sheet tbody th div { height: 16px; line-height: 16px; }
.sheet th.cur { color: #f00; font-weight: bold; background: linear-gradient(#fbfbfb, #e0e0de); }
.sheet td { height: 17px; border: solid #c3c3c1; border-width: 0 1px 1px 0; font-size: 13px; line-height: 18px; color: #000; text-align: right; }
.sheet td div { height: 16px; margin: 0 2px; overflow: hidden; white-space: nowrap; }
.sheet td:nth-child(2) div { text-align: left; margin-right: 1px; }
.sheet td.active { position: relative; }
.active::before { content: ""; position: absolute; inset: 0; border: 1px solid #000; }
.active::after { content: ""; position: absolute; inset: -1px -2px -2px -1px; border: solid #000; border-width: 0 1px 1px 0; }
.active i { position: absolute; z-index: 1; right: -3px; bottom: -3px; width: 5px; height: 5px; background: conic-gradient(#000 0 0) 0 0/2px 2px no-repeat, conic-gradient(#000 0 0) 3px 0/2px 2px no-repeat, conic-gradient(#000 0 0) 0 3px/2px 2px no-repeat, conic-gradient(#000 0 0) 3px 3px/2px 2px no-repeat #fff; }
.v-side { flex: none; width: 12px; padding-top: 20px; display: flex; }
.v-scroll { flex: 1; padding: 3px; background: #c3c5c4; border-top: 1px solid #b0b2b1; }
.v-scroll i { display: block; height: 40px; border-radius: 3px; background: #7a7f7f; }
.h-side { flex: none; padding: 0 12px 0 58px; }
.h-scroll { height: 18px; padding: 6px 3px; background: #c3c5c4; border-left: 1px solid #b0b2b1; }
.g-foot { flex: none; height: 38px; display: flex; padding-bottom: 1px; }
.sheet-tabs { flex: none; width: 488px; padding-left: 8px; background: #cfcfcd; border: solid #b0b0ae; border-width: 1px 1px 0 0; }
.sheet-tabs button { width: 193px; height: 36px; padding-bottom: 13px; border: solid #b8b8b6; border-width: 0 1px; background: #dbdbd9; box-shadow: inset 0 2px #4a90d9; font-weight: bold; }
.progress { flex: 1; border-bottom: 2px solid #cdcdcb; box-shadow: inset 0 -1px #b0b0ae; border-radius: 0 0 2px 2px; margin-right: 2px; }
.suma { flex: none; width: 258px; display: flex; align-items: center; justify-content: center; padding-right: 2px; border: 1px solid #b0b2af; color: #3b4446; }
.foot-end { flex: none; width: 97px; }
```
FILE: sheet.js
```js
const values = ["0.00 13.44", "0.74 9.43", "0.00 4.91", "0.00 6.82", "0.00 5.09", "0.00 2.96", "0.00 2.72", "0.00 1.68", "0.00 3.07", "0.00 6.36", "0.00 8.67", "0.00 6.15", "0.00 5.86", "0.00 11.13", "0.00 7.13", "0.00 6.02", "0.00 4.59", "0.39 4.22", "0.00 10.35", "9.30 5.93", "0.00 5.33", "0.00 9.45", "0.00 7.78", "0.00 3.28"];
const letters = "ABCDEFGHIJKLMNOPQR".split("");

document.getElementById("cols").innerHTML = "<th></th>" + letters.map((l, i) => `<th${i ? "" : ' class="cur"'}>${l}</th>`).join("");

document.getElementById("rows").innerHTML = values.map((v, i) => {
  const day = String(i < 22 ? i + 1 : i + 2).padStart(2, "0");
  const [b, c] = v.split(" ");
  const first = i === 0;
  return `<tr><th${first ? ' class="cur"' : ""}><div>${i + 1}</div></th>` +
    `<td${first ? ' class="active"' : ""}><div>${day} 01 2017</div>${first ? "<i></i>" : ""}</td>` +
    `<td><div>${b}</div></td><td><div>${c}</div></td>` + "<td></td>".repeat(15) + "</tr>";
}).join("");

const soundings = ["00Z 01|0.00|12.77", "12Z 01|0.00|13.44", "00Z 02|0.00|13.42", "12Z 02|0.74|9.43", "00Z 03|0.75|6.78", "12Z 03|0.00|4.91", "00Z 04|0.00|5.10", "12Z 04|0.00|6.82", "00Z 05|0.00|6.95", "12Z 05|0.00|5.09", "00Z 06|0.00|4.69", "12Z 06|0.00|2.96", "00Z 07|0.00|3.21", "12Z 07|0.00|2.72", "00Z 08|0.00|2.04"];
document.getElementById("shot-lines").innerHTML = soundings.map((s, i) => {
  const [t, p, w] = s.split("|");
  return `<text x="3" y="${16 + i * 20}">${t} Jan 2017<tspan fill="#c22">,</tspan> ${p}<tspan fill="#c22">,</tspan> ${w}</text>`;
}).join("");
```
